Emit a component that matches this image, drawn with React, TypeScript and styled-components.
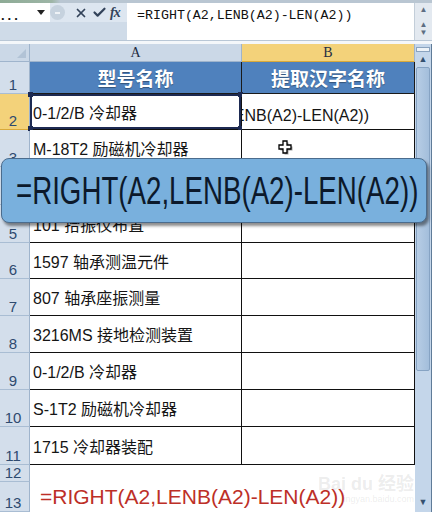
import * as React from 'react';
import styled, { createGlobalStyle } from 'styled-components';
import { X, Check } from 'lucide-react';

const FONT = `"Liberation Sans", "Noto Sans CJK SC", sans-serif`;
const FORMULA = '=RIGHT(A2,LENB(A2)-LEN(A2))';

const GlobalStyle = createGlobalStyle`
  html, body { margin: 0; padding: 0; background: #fff; }
  body { font-family: ${FONT}; }
`;

const Page = styled.div`
  position: relative;
  width: 432px;
  height: 524px;
  overflow: hidden;
  display: flex;
  flex-direction: column;
  background: #fff;
`;
const TopStrip = styled.div`
  height: 3px;
  background: linear-gradient(90deg, #8eab96 0, #9db5a6 12%, #b9c6d2 14%, #b9c6d2 100%);
`;
const FormulaBar = styled.div`
  height: 37px;
  display: flex;
  background: #cfdbe8;
`;
const BarLeft = styled.div`
  width: 127px;
  display: flex;
  flex-direction: column;
`;
const BarTools = styled.div`
  height: 19px;
  display: flex;
  align-items: center;
  background: #dde6f0;
`;
const NameBox = styled.div`
  width: 50px;
  height: 19px;
  box-sizing: border-box;
  padding: 0 5px 0 1px;
  background: #fff;
  display: flex;
  align-items: center;
  justify-content: space-between;
  font: bold 13px "Liberation Sans", sans-serif;
  letter-spacing: 3px;
  color: #111;
`;
const Dots = styled.span`
  padding-top: 5px;
`;
const PillButton = styled.div`
  width: 15px;
  height: 15px;
  border-radius: 50%;
  background: #c6d2de;
  display: flex;
  align-items: center;
  justify-content: center;
  margin-right: 7px;
  &::after {
    content: '';
    width: 5px;
    height: 2px;
    background: #eef2f6;
  }
`;
const ToolIcon = styled.span`
  width: 18px;
  display: flex;
  justify-content: center;
  color: #33435a;
`;
const Fx = styled.span`
  font: italic bold 14px "Liberation Serif", serif;
  color: #33435a;
  margin-left: 2px;
  letter-spacing: -1px;
`;
const FormulaInput = styled.div`
  flex: 1;
  background: #fff;
  padding: 5px 0 0 10px;
  font: 13.3px "Liberation Mono", monospace;
  color: #111;
  white-space: nowrap;
`;
const BarScroll = styled.div`
  width: 17px;
  background: #e3e9f0;
  border-left: 1px solid #c3ced9;
  display: flex;
  flex-direction: column;
  align-items: center;
  justify-content: space-around;
  color: #5d6e82;
  font-size: 8px;
  line-height: 8px;
`;
const Spacer = styled.div`
  height: 4px;
  background: #f4f7fa;
  border-top: 1px solid #b9c7d6;
  box-sizing: border-box;
`;
const Main = styled.div`
  height: 468px;
  display: flex;
`;
const Sheet = styled.div`
  width: 415px;
  display: grid;
  grid-template-columns: 30px 212px 173px;
  grid-template-rows: 18px 32px 36px 37px 38px 38px 36px 37px 37px 37px 37px 38px 17px 30px;
`;
const Corner = styled.div`
  background: #cbd8e7;
  border-right: 1px solid #9fb4cc;
  border-bottom: 1px solid #9fb4cc;
  position: relative;
  &::after {
    content: '';
    position: absolute;
    right: 3px;
    bottom: 3px;
    border-left: 9px solid transparent;
    border-bottom: 9px solid #b2c3d6;
  }
`;
const ColHead = styled.div<{ $active?: boolean }>`
  background: ${({ $active }) => ($active ? '#f3d27a' : '#cbd8e7')};
  border-right: 1px solid #9fb4cc;
  border-bottom: 1px solid ${({ $active }) => ($active ? '#d9a93a' : '#9fb4cc')};
  display: flex;
  align-items: center;
  justify-content: center;
  font: 14px "Liberation Serif", serif;
  color: #1f2d42;
`;
const RowHead = styled.div<{ $active?: boolean }>`
  background: ${({ $active }) => ($active ? '#f3d27a' : '#d3deeb')};
  border-right: 1px solid #9fb4cc;
  border-bottom: 1px solid ${({ $active }) => ($active ? '#d9a93a' : '#a9bdd3')};
  display: flex;
  align-items: flex-end;
  justify-content: center;
  padding: 0 3px 0 0;
  font: 15px "Liberation Sans", sans-serif;
  line-height: 17px;
  color: #2e4a6f;
  overflow: hidden;
`;
const HeadCell = styled.div`
  background: #4f81bd;
  border-right: 1px solid #1a1a1a;
  border-bottom: 1px solid #1a1a1a;
  display: flex;
  align-items: center;
  justify-content: center;
  font: bold 19px ${FONT};
  color: #fff;
  text-shadow: 0 1px 1px rgba(0, 0, 0, 0.35);
`;
const Cell = styled.div<{ $selected?: boolean }>`
  position: relative;
  background: #fff;
  border-right: 1px solid #111;
  border-bottom: 1px solid #111;
  display: flex;
  align-items: center;
  padding-left: 3px;
  font: 16px ${FONT};
  color: #151515;
  white-space: nowrap;
  box-shadow: ${({ $selected }) => ($selected ? 'inset 0 0 0 2px #1d2a52' : 'none')};
`;
const EditCell = styled(Cell)`
  overflow: hidden;
  justify-content: flex-end;
  padding: 8px 45px 0 0;
`;
const Handle = styled.span<{ $side: 'left' | 'right'; $edge: 'top' | 'bottom' }>`
  position: absolute;
  width: 5px;
  height: 5px;
  background: #1d2a52;
  ${({ $side }) => ($side === 'left' ? 'left: -2px;' : 'right: -2px;')}
  ${({ $edge }) => ($edge === 'top' ? 'top: -2px;' : 'bottom: -2px;')}
`;
const BlankCell = styled.div`
  background: #fff;
`;
const NoteCell = styled.div`
  grid-column: span 2;
  display: flex;
  align-items: center;
  padding-left: 10px;
  font: 21px "Liberation Sans", sans-serif;
  color: #bd2f27;
  white-space: nowrap;
`;
const VScroll = styled.div`
  width: 17px;
  display: flex;
  flex-direction: column;
  background: #c4d6ea;
  border-right: 1px solid #5f7b98;
  box-sizing: border-box;
`;
const ScrollButton = styled.div<{ $h: number }>`
  height: ${({ $h }) => $h}px;
  display: flex;
  flex-direction: column;
  align-items: center;
  justify-content: flex-end;
  color: #34506f;
  font-size: 9px;
  line-height: 9px;
`;
const SplitBar = styled.span`
  width: 12px;
  height: 3px;
  border: 1px solid #8aa3bf;
  background: #eef3f8;
  margin-bottom: 3px;
`;
const Track = styled.div`
  flex: 1;
  padding: 3px 1px 0 1px;
`;
const Thumb = styled.div`
  height: 302px;
  border: 1px solid #86a3c3;
  border-radius: 2px;
  background: linear-gradient(90deg, #b7cde5, #a3bedb);
`;
const Callout = styled.div`
  position: absolute;
  left: 1px;
  top: 158px;
  width: 426px;
  height: 65px;
  box-sizing: border-box;
  border: 1px solid #4b6c8d;
  border-radius: 8px;
  background: #79b0dd;
  box-shadow: 2px 3px 3px rgba(0, 0, 0, 0.45);
  display: flex;
  align-items: center;
  padding-left: 14px;
  white-space: nowrap;
`;
const CalloutText = styled.span`
  display: inline-block;
  font: 39px "Liberation Sans", sans-serif;
  color: #0c192b;
  transform: scaleX(0.71);
  transform-origin: left center;
`;
const Pointer = styled.svg`
  position: absolute;
  left: 276px;
  top: 139px;
`;
const Watermark = styled.div`
  position: absolute;
  left: 318px;
  top: 474px;
  display: flex;
  flex-direction: column;
  align-items: flex-end;
  color: rgba(120, 120, 120, 0.14);
  font: bold 18px ${FONT};
  line-height: 20px;
`;
const WatermarkSmall = styled.span`
  font: 9px "Liberation Sans", sans-serif;
  line-height: 10px;
`;

const rows: { n: number; a: string }[] = [
  { n: 3, a: 'M-18T2 励磁机冷却器' },
  { n: 4, a: '1597 轴承测温元件' },
  { n: 5, a: '101 拾振仪布置' },
  { n: 6, a: '1597 轴承测温元件' },
  { n: 7, a: '807 轴承座振测量' },
  { n: 8, a: '3216MS 接地检测装置' },
  { n: 9, a: '0-1/2/B 冷却器' },
  { n: 10, a: 'S-1T2 励磁机冷却器' },
  { n: 11, a: '1715 冷却器装配' },
];

function App() {
  return (
    <Page>
      <GlobalStyle />
      <TopStrip />
      <FormulaBar>
        <BarLeft>
          <BarTools>
            <NameBox>
              <Dots>...</Dots>
              <svg width="8" height="5" viewBox="0 0 8 5">
                <path d="M0 0 L8 0 L4 5 Z" fill="#222" />
              </svg>
            </NameBox>
            <PillButton />
            <ToolIcon>
              <X size={14} strokeWidth={3} />
            </ToolIcon>
            <ToolIcon>
              <Check size={15} strokeWidth={3.5} />
            </ToolIcon>
            <Fx>fx</Fx>
          </BarTools>
        </BarLeft>
        <FormulaInput>{FORMULA}</FormulaInput>
        <BarScroll>
          <span>▲</span>
          <span>
            ▲
            <br />▼
          </span>
        </BarScroll>
      </FormulaBar>
      <Spacer />
      <Main>
        <Sheet>
          <Corner />
          <ColHead>A</ColHead>
          <ColHead $active>B</ColHead>

          <RowHead>1</RowHead>
          <HeadCell>型号名称</HeadCell>
          <HeadCell>提取汉字名称</HeadCell>

          <RowHead $active>2</RowHead>
          <Cell $selected>
            0-1/2/B 冷却器
            <Handle $side="left" $edge="top" />
            <Handle $side="right" $edge="top" />
            <Handle $side="left" $edge="bottom" />
            <Handle $side="right" $edge="bottom" />
          </Cell>
          <EditCell>{FORMULA}</EditCell>

          {rows.map((row) => (
            <React.Fragment key={row.n}>
              <RowHead>{row.n}</RowHead>
              <Cell>{row.a}</Cell>
              <Cell />
            </React.Fragment>
          ))}

          <RowHead>12</RowHead>
          <BlankCell />
          <BlankCell />

          <RowHead>13</RowHead>
          <NoteCell>{FORMULA}</NoteCell>
        </Sheet>
        <VScroll>
          <ScrollButton $h={20}>
            <SplitBar />
            <span>▲</span>
          </ScrollButton>
          <Track>
            <Thumb />
          </Track>
          <ScrollButton $h={18}>
            <span style={{ marginBottom: 5 }}>▼</span>
          </ScrollButton>
        </VScroll>
      </Main>

      <Callout>
        <CalloutText>{FORMULA}</CalloutText>
      </Callout>

      <Pointer width="18" height="18" viewBox="0 0 18 18">
        <path d="M7 2 H11 V6 H15 V10 H11 V14 H7 V10 H3 V6 H7 Z" fill="#444" transform="translate(1.5 1.5)" opacity="0.5" />
        <path d="M7 2 H11 V6 H15 V10 H11 V14 H7 V10 H3 V6 H7 Z" fill="#fff" stroke="#000" strokeWidth="1.3" />
      </Pointer>

      <Watermark>
        <span>Bai du 经验</span>
        <WatermarkSmall>jingyan.baidu.com</WatermarkSmall>
      </Watermark>
    </Page>
  );
}

export default App;
